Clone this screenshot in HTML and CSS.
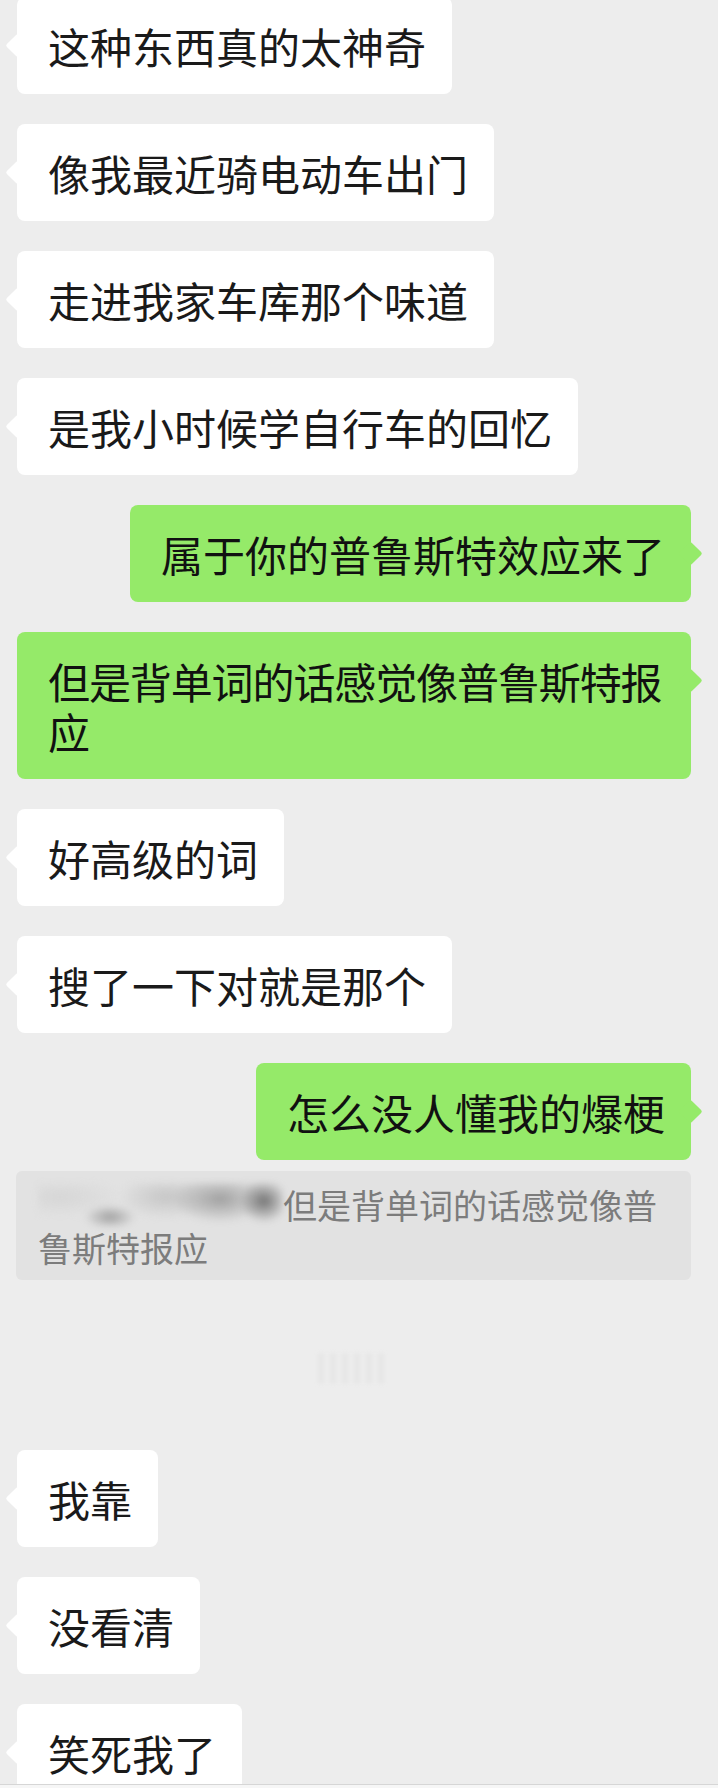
FILE: index.html
```html
<!DOCTYPE html>
<html lang="zh-CN">
<head>
  <meta charset="UTF-8" />
  <meta name="viewport" content="width=device-width, initial-scale=1.0" />
  <title>聊天记录</title>
  <link rel="stylesheet" href="styles.css">
</head>
<body>
  <div class="chat">
    <div class="row left first"><div class="bubble">这种东西真的太神奇</div></div>
    <div class="row left"><div class="bubble">像我最近骑电动车出门</div></div>
    <div class="row left"><div class="bubble">走进我家车库那个味道</div></div>
    <div class="row left"><div class="bubble">是我小时候学自行车的回忆</div></div>
    <div class="row right"><div class="bubble green">属于你的普鲁斯特效应来了</div></div>
    <div class="row right"><div class="bubble green tight">但是背单词的话感觉像普鲁斯特报应</div></div>
    <div class="row left"><div class="bubble">好高级的词</div></div>
    <div class="row left"><div class="bubble">搜了一下对就是那个</div></div>
    <div class="row right quoted"><div class="bubble green">怎么没人懂我的爆梗</div></div>

    <div class="quote"><span class="redact"></span>但是背单词的话感觉像普鲁斯特报应</div>

    <div class="time"><span class="time-blur"></span></div>

    <div class="row left"><div class="bubble">我靠</div></div>
    <div class="row left"><div class="bubble">没看清</div></div>
    <div class="row left"><div class="bubble">笑死我了</div></div>
  </div>
  <div class="input-bar"></div>
</body>
</html>
```

FILE: styles.css
```css
* {
  margin: 0;
  padding: 0;
  box-sizing: border-box;
}
body {
  width: 718px;
  height: 1788px;
  overflow: hidden;
  background: #ededed;
  font-family: "Noto Sans CJK SC", "Noto Sans", sans-serif;
  color: #1a1a1a;
}
.chat {
  height: 1784px;
  overflow: hidden;
  padding: 0 27px 0 17px;
}
.row {
  display: flex;
  margin-bottom: 30px;
}
.row.first {
  margin-top: -3px;
}
.row.left {
  justify-content: flex-start;
}
.row.right {
  justify-content: flex-end;
}
.row.quoted {
  margin-bottom: 11px;
}
.bubble {
  position: relative;
  max-width: 100%;
  background: #fff;
  border-radius: 8px;
  font-size: 42px;
  line-height: 50px;
  padding: 24px 26px 23px 31px;
}
.bubble::before {
  content: '';
  position: absolute;
  top: 40px;
  left: -8px;
  width: 17px;
  height: 17px;
  background: inherit;
  border-radius: 2px;
  transform: rotate(45deg);
}
.bubble.green {
  background: #95ea69;
  color: #111;
}
.bubble.green::before {
  left: auto;
  right: -8px;
}
.bubble.tight {
  letter-spacing: -1.1px;
  padding-right: 24px;
}
.quote {
  margin: 0 0 73px -1px;
  background: #e2e2e2;
  border-radius: 6px;
  color: #7c7c7c;
  font-size: 34px;
  line-height: 42px;
  padding: 12px 20px 11px 22px;
}
.redact {
  display: inline-block;
  width: 245px;
  height: 44px;
  vertical-align: -8px;
  filter: blur(3px);
  background:
    radial-gradient(ellipse 24px 22px at 226px 18px, #737373, transparent),
    radial-gradient(ellipse 48px 24px at 182px 16px, #a0a0a0, transparent),
    radial-gradient(ellipse 48px 22px at 128px 14px, #c6c6c6, transparent),
    radial-gradient(ellipse 26px 12px at 72px 34px, #a0a0a0, transparent),
    radial-gradient(ellipse 62px 20px at 22px 14px, #d6d6d6, transparent);
}
.time {
  display: flex;
  justify-content: center;
  margin-bottom: 66px;
}
.time-blur {
  width: 72px;
  height: 31px;
  opacity: 0.3;
  filter: blur(2px);
  background: repeating-linear-gradient(90deg, #d6d6d6 0 6px, transparent 6px 12px);
}
.input-bar {
  height: 4px;
  border-top: 1px solid #d6d6d6;
  background: #f6f6f6;
}
```
